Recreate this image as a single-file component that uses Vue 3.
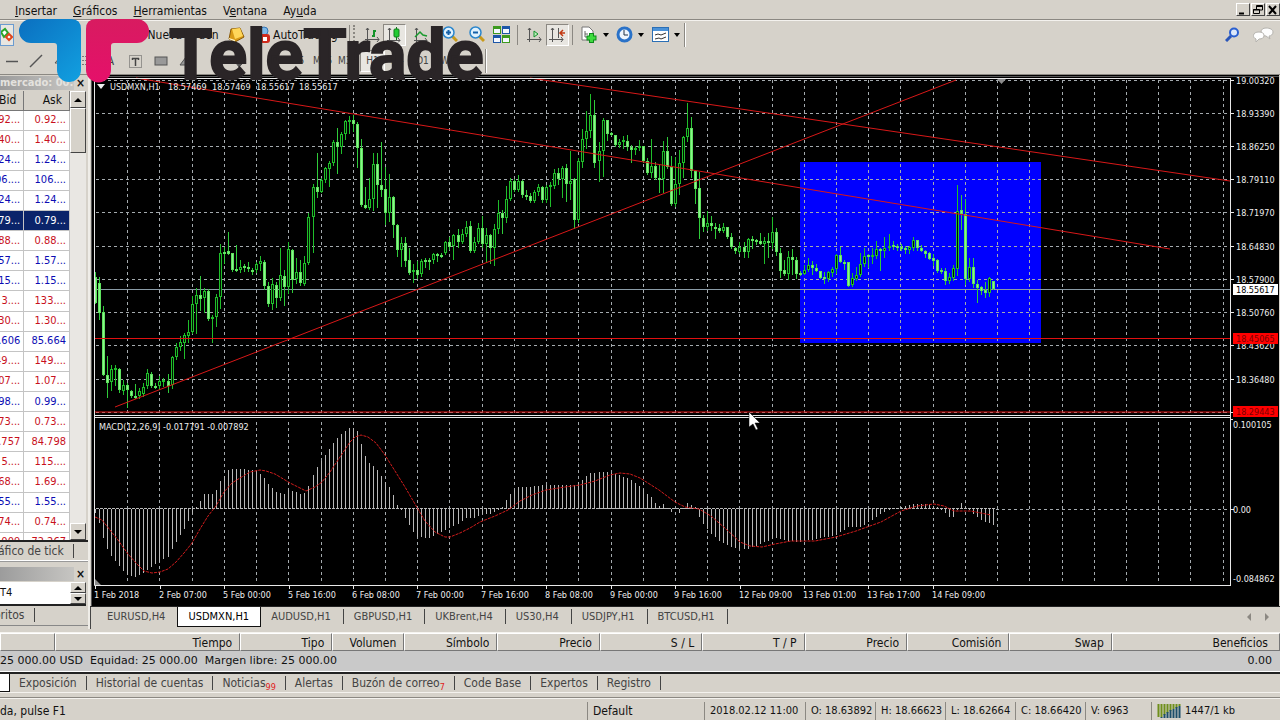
<script setup>
import { computed, ref } from 'vue';

const menus = [
  { key: 'I', rest: 'nsertar' },
  { key: 'G', rest: 'ráficos' },
  { key: 'H', rest: 'erramientas' },
  { pre: 'V', key: 'e', rest: 'ntana' },
  { pre: 'Ay', key: 'u', rest: 'da' },
];

const frames = ['M5', 'M15', 'M30', 'H1', 'H4', 'D1', 'W1', 'MN'];
const frame = ref('H1');

const quotes = [
  { bid: '92...', ask: '0.92...', dir: 'down' },
  { bid: '40...', ask: '1.40...', dir: 'down' },
  { bid: '24...', ask: '1.24...', dir: 'up' },
  { bid: '06....', ask: '106....', dir: 'up' },
  { bid: '24...', ask: '1.24...', dir: 'up' },
  { bid: '79...', ask: '0.79...', dir: 'selected' },
  { bid: '88...', ask: '0.88...', dir: 'down' },
  { bid: '57...', ask: '1.57...', dir: 'up' },
  { bid: '15...', ask: '1.15...', dir: 'up' },
  { bid: '3....', ask: '133....', dir: 'down' },
  { bid: '30...', ask: '1.30...', dir: 'down' },
  { bid: '.606', ask: '85.664', dir: 'up' },
  { bid: '49....', ask: '149....', dir: 'down' },
  { bid: '07...', ask: '1.07...', dir: 'down' },
  { bid: '98...', ask: '0.99...', dir: 'up' },
  { bid: '73...', ask: '0.73...', dir: 'down' },
  { bid: '.757', ask: '84.798', dir: 'down' },
  { bid: '5....', ask: '115....', dir: 'down' },
  { bid: '68...', ask: '1.69...', dir: 'down' },
  { bid: '55...', ask: '1.55...', dir: 'up' },
  { bid: '74...', ask: '0.74...', dir: 'down' },
  { bid: '.009', ask: '72.267', dir: 'down' },
];

const chartTabs = ['EURUSD,H4', 'USDMXN,H1', 'AUDUSD,H1', 'GBPUSD,H1', 'UKBrent,H4', 'US30,H4', 'USDJPY,H1', 'BTCUSD,H1'];
const activeTab = ref('USDMXN,H1');

const columns = ['', 'Tiempo', 'Tipo', 'Volumen', 'Símbolo', 'Precio', 'S / L', 'T / P', 'Precio', 'Comisión', 'Swap', 'Beneficios'];

const terminalTabs = [
  { name: 'Exposición' },
  { name: 'Historial de cuentas' },
  { name: 'Noticias', badge: 99 },
  { name: 'Alertas' },
  { name: 'Buzón de correo', badge: 7 },
  { name: 'Code Base' },
  { name: 'Expertos' },
  { name: 'Registro' },
];

const status = ['2018.02.12 11:00', 'O: 18.63892', 'H: 18.66623', 'L: 18.62664', 'C: 18.66420', 'V: 6963'];

// chart geometry
const STEP = 4.028;
const barX = (i) => Math.round(95 + i * STEP);
const gridX = Array.from({ length: 35 }, (_, i) => Math.round(127.2 + i * 32.22));
const prices = ['19.00320', '18.93390', '18.86250', '18.79110', '18.71970', '18.64830', '18.57900', '18.50760', '18.43620', '18.36480'];
const gridY = Array.from({ length: 11 }, (_, i) => Math.round(79.6 + i * 33.22));
const dates = [
  '1 Feb 2018', '2 Feb 07:00', '5 Feb 00:00', '5 Feb 16:00', '6 Feb 08:00', '7 Feb 00:00', '7 Feb 16:00',
  '8 Feb 08:00', '9 Feb 00:00', '9 Feb 16:00', '12 Feb 09:00', '13 Feb 01:00', '13 Feb 17:00', '14 Feb 09:00',
];
const dateX = (i) => Math.round(95.2 + i * 64.44);
const header = [
  { x: 110, text: 'USDMXN,H1' },
  { x: 168, text: '18.57469' },
  { x: 212, text: '18.57469' },
  { x: 256, text: '18.55617' },
  { x: 299, text: '18.55617' },
];

// high, body top, body bottom, low, rising
const candles = [
  [272,277,303,303,0],[277,283,313,319,0],[306,312,375,375,0],[356,375,383,397,0],[365,369,382,390,1],[365,368,369,385,1],
  [368,369,390,392,0],[380,385,391,394,1],[383,385,390,407,0],[390,391,396,397,0],[384,396,397,398,0],[388,391,396,398,1],
  [383,387,394,396,1],[369,373,386,388,1],[372,374,386,387,0],[383,386,388,388,0],[376,381,386,389,1],[378,380,382,386,1],
  [374,381,386,392,0],[356,357,385,388,1],[343,347,357,359,1],[336,342,347,350,1],[333,335,343,358,1],[320,332,336,342,1],
  [296,304,332,333,1],[288,295,304,333,1],[276,295,299,310,0],[288,291,298,312,1],[289,291,319,320,0],[315,317,319,342,1],
  [294,297,317,326,1],[244,253,297,308,1],[247,252,254,263,0],[232,251,254,254,0],[253,253,270,271,0],[245,269,271,271,0],
  [260,267,270,272,1],[264,266,268,271,0],[262,267,269,271,0],[268,270,271,274,0],[262,264,270,272,1],[256,261,264,270,1],
  [260,262,286,289,0],[282,286,304,306,0],[278,284,304,309,1],[282,285,298,307,0],[248,275,298,300,1],[270,276,287,305,0],
  [242,249,287,293,1],[249,250,280,292,0],[258,272,279,283,1],[260,272,283,285,0],[256,263,284,285,1],[213,217,263,264,1],
  [184,187,217,252,1],[153,187,192,197,0],[178,180,192,192,1],[167,168,180,182,1],[161,163,169,186,1],[140,142,163,165,1],
  [128,142,147,173,0],[132,134,147,153,1],[120,121,134,139,1],[116,120,121,133,1],[115,120,124,131,0],[122,124,148,167,0],
  [139,148,205,206,0],[187,205,208,208,0],[178,199,208,209,1],[153,164,199,210,1],[153,164,185,207,0],[142,185,190,196,0],
  [167,189,213,224,0],[174,197,213,221,1],[196,197,225,237,0],[224,225,250,256,0],[237,243,250,266,1],[237,243,261,266,0],
  [248,260,273,274,0],[264,270,272,282,1],[261,270,275,278,0],[259,261,274,276,1],[258,260,261,267,0],[258,260,262,269,0],
  [253,254,260,263,1],[253,254,256,261,0],[253,255,257,257,0],[241,242,253,254,1],[237,242,247,249,0],[234,235,246,259,1],
  [229,235,242,247,0],[229,234,242,243,1],[221,227,234,236,1],[221,226,251,252,0],[237,242,251,252,1],[223,228,242,243,1],
  [216,228,244,247,0],[228,235,244,262,1],[234,235,248,263,0],[224,229,248,265,1],[200,213,229,233,1],[210,213,218,233,0],
  [186,199,218,222,1],[178,181,199,200,1],[179,181,190,191,0],[175,181,190,191,1],[180,181,195,197,0],[190,195,197,199,0],
  [193,196,201,202,0],[190,192,201,202,1],[184,187,192,195,1],[186,187,200,202,0],[185,187,200,202,1],[182,185,187,206,1],
  [169,173,186,188,1],[168,173,179,184,0],[166,168,179,197,1],[164,168,184,201,0],[151,181,184,199,1],[178,179,220,228,0],
  [158,161,220,222,1],[129,139,162,167,1],[111,131,139,148,1],[94,115,131,137,1],[100,115,163,167,0],[142,151,161,181,1],
  [118,120,151,176,1],[120,120,134,140,0],[132,133,134,135,0],[135,135,145,146,0],[139,142,145,147,1],[136,140,142,148,1],
  [135,141,147,150,0],[145,147,150,162,0],[146,148,150,154,1],[140,146,147,150,1],[146,146,161,162,0],[158,161,173,174,0],
  [139,166,173,177,1],[162,166,178,179,0],[165,178,180,192,0],[141,151,179,192,1],[137,151,167,168,0],[156,167,204,205,0],
  [157,184,204,206,1],[150,163,184,194,1],[136,137,163,177,1],[103,128,137,141,1],[117,128,171,177,0],[170,171,189,203,0],
  [172,188,218,238,0],[215,218,227,231,0],[211,223,227,230,1],[216,223,226,230,0],[223,227,228,238,0],[224,228,231,232,0],
  [223,227,231,232,1],[227,227,237,238,0],[233,237,247,248,0],[247,248,251,253,0],[242,247,252,253,1],[242,247,252,257,0],
  [238,239,252,257,1],[236,239,240,248,0],[239,240,242,244,0],[233,241,244,244,0],[237,241,244,263,1],[233,241,243,257,0],
  [217,232,243,248,1],[228,232,252,255,0],[248,253,271,277,0],[260,270,274,275,0],[251,257,274,279,1],[249,257,260,274,0],
  [257,260,274,278,0],[271,273,274,275,0],[265,270,274,274,1],[258,265,270,271,1],[261,265,268,274,0],[264,268,271,271,0],
  [271,271,278,278,0],[272,277,279,283,0],[271,272,279,281,1],[267,269,273,276,1],[254,255,269,273,1],[247,255,262,262,0],
  [260,262,263,269,0],[262,262,286,286,0],[273,278,285,286,1],[267,275,279,280,1],[253,264,275,276,1],[248,256,264,266,1],
  [254,255,257,267,0],[248,255,257,263,1],[241,249,256,258,1],[248,249,251,270,0],[237,248,251,257,1],[234,246,248,250,1],
  [241,245,247,249,0],[244,246,248,250,0],[244,247,248,250,0],[246,248,250,253,0],[246,247,250,253,1],[237,240,248,250,1],
  [240,240,248,250,0],[245,248,251,251,0],[250,251,254,257,0],[252,253,259,259,0],[254,258,261,265,0],[259,260,271,272,0],
  [268,270,271,273,0],[268,271,281,284,0],[273,277,281,283,1],[265,268,278,280,1],[185,211,269,275,1],[195,210,214,229,0],
  [199,214,279,284,0],[258,267,279,281,1],[258,267,284,287,0],[280,284,288,302,0],[286,287,291,294,0],[282,290,293,297,0],
  [277,278,293,296,1],[281,281,289,289,0],
];

// MACD histogram: bar index and height above the zero line
const macdKeys = [
  [0,-4],[1,-14],[2,-29],[3,-40],[4,-47],[5,-52],[6,-57],[7,-62],[8,-66],[10,-68],[12,-64],[14,-58],[16,-53],[18,-48],[19,-40],
  [20,-33],[22,-20],[24,-5],[25,2],[26,8],[27,15],[29,15],[30,19],[31,28],[32,33],[33,39],[34,40],[37,40],[40,38],[41,35],
  [42,31],[43,25],[45,17],[47,15],[48,19],[50,17],[51,15],[52,16],[53,23],[54,34],[55,42],[57,54],[59,66],[61,75],[63,81],
  [64,81],[65,78],[66,65],[67,53],[68,46],[70,39],[72,27],[73,22],[74,14],[75,4],[76,-1],[77,-9],[79,-23],[80,-28],[83,-29],
  [86,-23],[90,-15],[92,-9],[94,-9],[96,-5],[98,-5],[100,-1],[101,2],[103,15],[105,22],[108,22],[112,24],[116,24],[119,24],
  [121,29],[123,36],[127,37],[130,34],[133,29],[136,20],[137,15],[138,12],[139,6],[140,3],[141,5],[143,-3],[144,0],[145,-4],
  [147,6],[149,2],[150,-8],[151,-15],[153,-25],[155,-32],[158,-38],[160,-40],[162,-40],[165,-35],[169,-29],[172,-32],[175,-33],
  [179,-30],[184,-26],[187,-18],[190,-18],[193,-11],[195,-5],[197,-1],[200,2],[203,5],[206,5],[209,2],[211,-4],[212,-8],
  [213,-8],[214,-1],[215,6],[216,2],[218,-5],[220,-11],[223,-16],
];
const macd = computed(() =>
  candles.map((_, i) => {
    const n = macdKeys.findIndex((k) => k[0] >= i);
    const [bx, by] = macdKeys[n];
    if (bx === i) return by;
    const [ax, ay] = macdKeys[n - 1];
    return Math.round(ay + ((by - ay) * (i - ax)) / (bx - ax));
  }),
);

const signal =
  '95,517 102,520 110,530 118,540 128,554 136,563 144,571 152,573 160,572 168,569 176,562 184,553 192,543 200,529 208,516 ' +
  '216,506 224,492 232,483 240,478 250,472 260,470 266,471 275,474 290,483 300,488 306,491 315,487 322,482 330,472 340,457 ' +
  '350,442 355,437 361,435 368,437 376,443 385,455 395,471 405,487 415,504 425,521 435,532 445,537 450,537 460,533 470,528 ' +
  '480,522 495,516 508,510 520,501 532,495 546,490 565,487 580,485 595,481 610,475 620,473 630,474 640,478 659,490 675,502 ' +
  '685,507 699,509 711,516 726,529 740,542 750,546 762,547 775,544 791,541 815,541 836,537 856,531 881,522 901,511 917,506 ' +
  '934,504 944,506 954,511 971,511 991,515';
</script>

<template>
  <div class="terminal">
    <header class="menubar">
      <nav class="menus">
        <button v-for="m in menus" :key="m.rest" class="menu">{{ m.pre }}<u>{{ m.key }}</u>{{ m.rest }}</button>
      </nav>
      <div class="window-buttons">
        <button class="win" aria-label="Minimizar"><svg width="12" height="10"><path d="M2 8.500h5" stroke="#000" stroke-width="2" /></svg></button>
        <button class="win" aria-label="Restaurar">
          <svg width="12" height="10"><path d="M4.500 4V.500h6v4.500H8M4 1.500h7M1.500 4.500h6v4h-6zM1 5h7" fill="none" stroke="#000" /></svg>
        </button>
        <button class="win" aria-label="Cerrar"><svg width="12" height="10"><path d="M2 1l7 8M9 1l-7 8" stroke="#000" stroke-width="2" /></svg></button>
      </div>
    </header>

    <div class="toolbar toolbar-main">
      <button class="tool first pressed" aria-label="Símbolos">
        <svg width="13" height="16"><path d="M0 5l4-3 3 4-4 4z" fill="#fff" stroke="#2aa52a" stroke-width="2" /><path d="M5 10l3-3 3 3-3 3z" fill="#fff" stroke="#e0461c" stroke-width="2" /></svg>
      </button>
      <button class="tool order">Nueva Orden</button>
      <button class="tool book" aria-label="MetaEditor">
        <svg width="18" height="18" viewBox="0 0 18 18"><path d="M4 3l9-1 4 9-9 5-6-3z" fill="#d89a16" stroke="#8a5a08" /><path d="M5 3l8-1 3 8-8 3z" fill="#ffd75a" /><path d="M2 12l6 2v2l-6-3z" fill="#fff3c0" /></svg>
      </button>
      <button class="tool auto">
        <svg width="14" height="18" viewBox="0 0 14 18"><circle cx="6" cy="5" r="4" fill="#7db8e8" stroke="#3575b5" /><rect x="2" y="8" width="10" height="9" rx="3" fill="#d02a1c" /><rect x="5" y="11" width="4" height="4" fill="#fff" /></svg>
        <span>AutoTrading</span>
      </button>
      <i class="grip"></i>
      <button class="tool w23" aria-label="Barras">
        <svg width="16" height="16"><path d="M3.500 1v14M1 12.500h14M13 10l2 2.500-2 2.500M2 3l1.500-2L5 3" fill="none" stroke="#555" /><path d="M8 9h2M10 3v7M10 4h2" stroke="#14932a" stroke-width="2" /></svg>
      </button>
      <button class="tool w23 pressed" aria-label="Velas">
        <svg width="16" height="16"><path d="M2.500 1v14M0 13.500h13M11 11l2 2.500-2 2M1 3l1.500-2L4 3" fill="none" stroke="#555" /><path d="M9.500 0v13" stroke="#117a1c" /><rect x="7" y="2" width="5" height="8" rx="1" fill="#22cc33" stroke="#117a1c" /></svg>
      </button>
      <button class="tool w29" aria-label="Línea">
        <svg width="16" height="16"><path d="M3.500 1v14M1 13.500h13M12 11l2 2.500-2 2M2 3l1.500-2L5 3" fill="none" stroke="#555" /><path d="M2 10l5-5 3 3 4 1" fill="none" stroke="#189a2c" stroke-width="1.500" /></svg>
      </button>
      <button class="tool w29" aria-label="Acercar">
        <svg width="16" height="17"><path d="M10 10l5 5" stroke="#c99a1a" stroke-width="3" /><circle cx="6.500" cy="6.500" r="5.500" fill="#dff1fd" stroke="#2b86cc" stroke-width="1.500" /><path d="M4 6.500h5M6.500 4v5" stroke="#1460a8" stroke-width="2" /></svg>
      </button>
      <button class="tool w25" aria-label="Alejar">
        <svg width="16" height="17"><path d="M10 10l5 5" stroke="#c99a1a" stroke-width="3" /><circle cx="6.500" cy="6.500" r="5.500" fill="#dff1fd" stroke="#2b86cc" stroke-width="1.500" /><path d="M4 6.500h5" stroke="#1460a8" stroke-width="2" /></svg>
      </button>
      <button class="tool w25" aria-label="Mosaico">
        <svg width="17" height="17"><rect width="8" height="8" fill="#3d9a1e" /><rect x="9" width="8" height="8" fill="#1c56a8" /><rect y="9" width="8" height="8" fill="#1c56a8" /><rect x="9" y="9" width="8" height="8" fill="#3d9a1e" /><path d="M1 5h6M10 5h6M1 14h6M10 14h6" stroke="#f4f8ff" stroke-width="4" /></svg>
      </button>
      <i class="sep"></i>
      <button class="tool w25" aria-label="Desplazamiento automático">
        <svg width="16" height="16"><path d="M3.500 1v14M1 12.500h14M13 10l2 2.500-2 2.500M2 3l1.500-2L5 3" fill="none" stroke="#555" /><path d="M8 4l4 3-4 3z" fill="#bff0c0" stroke="#14932a" /></svg>
      </button>
      <button class="tool w23 pressed" aria-label="Desplazar gráfico">
        <svg width="17" height="16"><path d="M3.500 1v14M0 12.500h14M12 10l2 2.500-2 2.500M2 3l1.500-2L5 3M9.500 1v10" fill="none" stroke="#555" /><path d="M11 6h5M14 3l-3 3 3 3" fill="none" stroke="#c23a14" stroke-width="1.500" /></svg>
      </button>
      <i class="sep"></i>
      <button class="tool drop" aria-label="Indicadores">
        <svg width="18" height="18"><path d="M2 1h7l4 4v9H2z" fill="#fff" stroke="#777" /><path d="M5 5v6h3M5 8h3" fill="none" stroke="#666" /><path d="M11.500 7v10M6.500 12h10" stroke="#0f8b1c" stroke-width="5" /><path d="M11.500 8v8M7.500 12h8" stroke="#3fdc3f" stroke-width="3" /></svg>
        <i class="caret"></i>
      </button>
      <button class="tool drop" aria-label="Períodos">
        <svg width="17" height="17"><circle cx="8.500" cy="8.500" r="6.500" fill="#eef6fd" stroke="#2a72c8" stroke-width="3" /><path d="M8 4v5h4" fill="none" stroke="#234" /></svg>
        <i class="caret"></i>
      </button>
      <button class="tool drop" aria-label="Plantillas">
        <svg width="17" height="15"><rect x=".5" y=".5" width="16" height="14" fill="#fff" stroke="#2b6fb5" /><path d="M1 2.500h15" stroke="#4b92d8" stroke-width="3" /><path d="M3 8l3-1 3 1 5-2M3 12l4-1 2 1 5-2" fill="none" stroke="#333" /></svg>
        <i class="caret"></i>
      </button>
      <i class="bar-end"></i>
      <span class="spacer"></span>
      <button class="tool" aria-label="Buscar">
        <svg width="15" height="15"><path d="M6 9l-5 5" stroke="#2a55b8" stroke-width="3" /><circle cx="9" cy="5.500" r="4" fill="#dce8fa" stroke="#2a5fd0" stroke-width="2" /></svg>
      </button>
      <button class="tool chat" aria-label="Chat">
        <svg width="21" height="16"><path d="M13 1c4 0 7 1.500 7 4s-2 4-4 4l1 3-4-3c-3 0-5-1.500-5-4s2-4 5-4z" fill="#fdfdfd" stroke="#b5b3ae" /><path d="M6 5c3 0 5 1 5 3.500S9 12 6 12l-3 3V12C1 11 .5 10 .5 8.500.5 6 3 5 6 5z" fill="#fff" stroke="#b5b3ae" /></svg>
      </button>
    </div>

    <div class="toolbar toolbar-draw">
      <button class="tool w23" aria-label="Línea horizontal"><svg width="14" height="14"><path d="M1 7.500h12" stroke="#555" stroke-width="1.500" /></svg></button>
      <button class="tool w25" aria-label="Línea de tendencia"><svg width="14" height="14"><path d="M1 13L13 1" stroke="#555" stroke-width="1.500" /></svg></button>
      <button class="tool w25" aria-label="Canal"><svg width="14" height="14"><path d="M1 9l7-8M3 13l8-8M1 9h8" stroke="#555" /></svg></button>
      <button class="tool w25" aria-label="Fibonacci"><svg width="14" height="14"><path d="M0 2.500h14M0 6.500h14M0 10.500h14" stroke="#777" stroke-dasharray="2 1" /></svg></button>
      <button class="tool w25" aria-label="Texto">A</button>
      <button class="tool w25" aria-label="Etiqueta">
        <svg width="15" height="15"><rect x="1.500" y="1.500" width="12" height="12" fill="none" stroke="#555" stroke-dasharray="1 1" /><path d="M4 4.500h7M7.500 4v8M4.500 4v2M10.500 4v2" stroke="#444" stroke-width="1.500" /></svg>
      </button>
      <button class="tool w25" aria-label="Rectángulo"><svg width="14" height="11"><rect x="1" y="1" width="12" height="8" fill="#999" stroke="#555" /></svg></button>
      <button class="tool w25" aria-label="Triángulo"><svg width="14" height="11"><path d="M1 9L7 1l6 8z" fill="#999" stroke="#555" /></svg></button>
      <button class="tool arrows" aria-label="Flechas"><svg width="14" height="14"><path d="M1 3l3 4 6-6M5 9h7l-4 4z" fill="#555" stroke="#555" /></svg></button>
      <button
        v-for="f in frames"
        :key="f"
        class="tool w25 frame"
        :class="{ pressed: f === frame }"
        @click="frame = f"
      >{{ f }}</button>
      <i class="bar-end"></i>
    </div>

    <div class="logo">
      <svg width="150" height="64" viewBox="0 19 150 64">
        <defs>
          <linearGradient id="blue" x1="0" y1="0" x2="1" y2="1"><stop offset="0" stop-color="#0a6fc0" /><stop offset="1" stop-color="#12a0e0" /></linearGradient>
          <linearGradient id="pink" x1="0" y1="0" x2="0" y2="1"><stop offset="0" stop-color="#d81b60" /><stop offset="1" stop-color="#e5106a" /></linearGradient>
        </defs>
        <path d="M31 19H71Q81 19 81 29V70A12 12 0 0 1 57 70V46Q57 43 54 43H31A12 12 0 0 1 31 19Z" fill="url(#blue)" />
        <path d="M96 19H137A12 12 0 0 1 137 43H114Q111 43 111 46V70A12.500 12.500 0 0 1 86 70V29Q86 19 96 19Z" fill="url(#pink)" />
      </svg>
      <span class="logo-text">TeleTrade</span>
    </div>

    <main class="workspace">
      <aside class="side">
        <div class="side-title"><span>mercado: 00:4</span><button class="close" aria-label="Cerrar">×</button></div>
        <div class="quotes">
          <div class="quotes-clip">
            <table class="quotes-table">
              <thead><tr><th>Bid</th><th>Ask</th></tr></thead>
              <tbody>
                <tr v-for="(q, i) in quotes" :key="i" :class="q.dir"><td>{{ q.bid }}</td><td>{{ q.ask }}</td></tr>
              </tbody>
            </table>
          </div>
          <div class="scroll">
            <button class="scroll-btn" aria-label="Subir"><i class="tri-up"></i></button>
            <div class="thumb"></div>
            <span class="spacer"></span>
            <button class="scroll-btn" aria-label="Bajar"><i class="tri-down"></i></button>
          </div>
        </div>
        <div class="side-tab tick"><button>áfico de tick</button></div>
        <div class="side-title navigator"><span></span><button class="close" aria-label="Cerrar">×</button></div>
        <div class="nav-list">
          <span>T4</span>
          <div class="spin">
            <button aria-label="Arriba"><i class="tri-up"></i></button>
            <button aria-label="Abajo"><i class="tri-down"></i></button>
          </div>
        </div>
        <div class="side-tab favorites"><button>oritos</button></div>
      </aside>

      <section class="chart-area">
        <svg class="chart" viewBox="90 75 1190 531">
          <rect x="91" y="75" width="1188" height="531" fill="#000" />
          <path d="M91.500 75v531M92 76.500h1187" stroke="#555" fill="none" />
          <rect x="800" y="162" width="241" height="181" fill="#0000ff" />

          <g class="grid">
            <line v-for="x in gridX" :key="'v' + x" :x1="x + 0.5" :x2="x + 0.5" y1="80" y2="583" />
            <line v-for="y in gridY" :key="'h' + y" x1="96" x2="1230" :y1="y + 0.5" :y2="y + 0.5" />
            <line x1="996" x2="1230" y1="509.5" y2="509.5" />
          </g>

          <line x1="95" x2="1230" y1="289.5" y2="289.5" stroke="#8a9ba6" />

          <g class="bars">
            <g v-for="(c, i) in candles" :key="i" :class="c[4] ? 'bull' : 'bear'">
              <line :x1="barX(i) + 0.5" :x2="barX(i) + 0.5" :y1="c[0]" :y2="c[3] + 1" />
              <rect :x="barX(i) - 0.5" :y="c[1] + 0.5" width="2" :height="Math.max(c[2] - c[1] - 1, 1)" />
            </g>
          </g>

          <g class="trend">
            <path d="M115 407L956 80M136 78L1170 249M530 78L1230 181" />
            <path d="M95 338.500H1230M95 412H1230" class="level" />
          </g>

          <rect x="95" y="414" width="1184" height="5" fill="#000" />
          <g class="histogram">
            <line x1="96" x2="996" y1="508.5" y2="508.5" stroke-dasharray="3 1" />
            <line v-for="(m, i) in macd" :key="i" :x1="barX(i) + 0.5" :x2="barX(i) + 0.5" y1="509" :y2="509 - m" />
          </g>
          <polyline class="signal" :points="signal" />

          <g class="frame-lines">
            <path d="M94.500 78V585.500H1231M94 78.500H1230M1230.500 78V586M94 415.500H1231M94 417.500H1231" />
            <path v-for="(d, i) in dates" :key="d" :d="`M${dateX(i) + 0.5} 586v3`" />
            <path v-for="y in gridY" :key="y" :d="`M1231 ${y + 0.5}h3`" />
            <path d="M1231 509.500h3M1231 419.500h2" />
          </g>
          <path d="M997 79h9l-4.500 5zM95 579l6 6h-6z" fill="#8c8c8c" />

          <g class="labels">
            <path d="M97 84h8l-4 5z" />
            <text v-for="h in header" :key="h.x" :x="h.x" y="90">{{ h.text }}</text>
            <text x="99" y="430">MACD(12,26,9) -0.017791 -0.007892</text>
            <text v-for="(p, i) in prices" :key="p" x="1236" :y="gridY[i] + 4">{{ p }}</text>
            <text x="1233" y="428">0.100105</text>
            <text x="1233" y="513">0.00</text>
            <text x="1233" y="582">-0.084862</text>
            <text v-for="(d, i) in dates" :key="d" :x="dateX(i) - 1" y="598">{{ d }}</text>
          </g>

          <rect x="1233" y="284" width="45" height="11" fill="#fff" />
          <text class="tag" x="1236" y="293">18.55617</text>
          <rect x="1233" y="333" width="45" height="11" fill="#f00" />
          <text class="tag level-tag" x="1236" y="342">18.45065</text>
          <rect x="1233" y="406" width="45" height="11" fill="#f00" />
          <text class="tag level-tag" x="1236" y="415">18.29443</text>

          <path d="M749 412v15l4-3 3 6 2-1-3-6h5z" fill="#fff" stroke="#000" stroke-width=".5" />
        </svg>

        <div class="chart-tabs">
          <button
            v-for="t in chartTabs"
            :key="t"
            class="chart-tab"
            :class="{ active: t === activeTab }"
            @click="activeTab = t"
          >{{ t }}</button>
          <span class="spacer"></span>
          <button class="page-btn" aria-label="Anterior"><i class="tri-left"></i></button>
          <button class="page-btn" aria-label="Siguiente"><i class="tri-right"></i></button>
        </div>
      </section>
    </main>

    <section class="account">
      <table class="orders">
        <thead><tr><th v-for="(c, i) in columns" :key="i">{{ c }}</th></tr></thead>
        <tbody>
          <tr>
            <td colspan="11">25 000.00 USD&#160; Equidad: 25 000.00&#160; Margen libre: 25 000.00</td>
            <td class="profit">0.00</td>
          </tr>
        </tbody>
      </table>
      <nav class="account-tabs">
        <i class="current"></i>
        <button v-for="t in terminalTabs" :key="t.name">{{ t.name }}<sub v-if="t.badge">{{ t.badge }}</sub></button>
      </nav>
    </section>

    <footer class="statusbar">
      <span class="help">da, pulse F1</span>
      <span class="profile">Default</span>
      <span v-for="(s, i) in status" :key="s" class="cell" :class="{ time: i === 0, volume: i === 5 }">{{ s }}</span>
      <span class="cell traffic">
        <svg width="24" height="14"><path d="M1.500 0v13M4.500 0v13M7.500 0v11M10.500 0v9M13.500 0v7M16.500 0v5M19.500 0v4M22.500 0v2" stroke="#6f8f1c" stroke-width="2" /><path d="M4.500 13v1M7.500 10v4M10.500 8v6M13.500 6v8M16.500 5v9M19.500 3v11M22.500 2v12" stroke="#1d4e6a" stroke-width="2" /></svg>
        1447/1 kb
      </span>
    </footer>
  </div>
</template>

<style>
body {
  margin: 0;
  background: #d6d2ca;
}
</style>

<style scoped>
.terminal {
  position: relative;
  min-height: 100vh;
  display: flex;
  flex-direction: column;
  overflow: hidden;
  background: #d6d2ca;
  color: #111;
  font-family: 'DejaVu Sans Condensed', 'DejaVu Sans', sans-serif;
  font-size: 12px;
  line-height: 14px;
}

button {
  margin: 0;
  padding: 0;
  border: 0;
  background: none;
  color: inherit;
  font: inherit;
  white-space: nowrap;
}

.spacer { flex: 1; }

/* Menu */
.menubar {
  display: flex;
  justify-content: space-between;
  align-items: center;
  height: 19px;
  padding-left: 15px;
  border-bottom: 1px solid #8b8882;
}

.menus {
  display: flex;
  gap: 16px;
  padding-top: 3px;
}

.window-buttons { display: flex; gap: 1px; }

.win {
  display: flex;
  align-items: center;
  justify-content: center;
  width: 14px;
  height: 13px;
  border: 1px solid;
  border-color: #fff #444 #444 #fff;
}

/* Toolbars */
.toolbar {
  display: flex;
  align-items: center;
  box-sizing: border-box;
}

.toolbar-main {
  height: 28px;
  border-top: 1px solid #f4f2ee;
}

.toolbar-draw {
  height: 27px;
  border-bottom: 1px solid #8b8882;
  color: #444;
}

.tool {
  display: flex;
  align-items: center;
  justify-content: center;
  flex: none;
  height: 22px;
  box-sizing: border-box;
}

.tool.pressed {
  border: 1px solid;
  border-color: #8b8882 #fff #fff #8b8882;
  background: #e8e6e1;
}

.tool.first { width: 14px; border-color: #6a9bd0; }
.order { width: 70px; margin-left: 134px; }
.book { width: 20px; margin-left: 8px; }
.auto { width: 86px; margin-left: 12px; gap: 1px; justify-content: flex-start; }
.w23 { width: 23px; }
.w25 { width: 25px; }
.w29 { width: 29px; }
.drop { width: 36px; gap: 5px; }
.chat { width: 22px; margin: 0 6px 0 12px; }
.arrows { width: 25px; margin: 0 35px 0 27px; }
.frame { font-size: 10px; }

.grip {
  width: 3px;
  height: 20px;
  margin: 0 5px;
  border-left: 1px solid #8b8882;
  border-right: 2px dotted #8b8882;
}

.sep {
  width: 1px;
  height: 20px;
  margin: 0 3px;
  background: #8b8882;
}

.bar-end {
  width: 1px;
  height: 24px;
  border-left: 1px solid #8b8882;
  background: #fff;
}

.caret {
  border: 3px solid transparent;
  border-top: 4px solid #000;
  border-bottom: 0;
}

/* Brand, floats over both toolbars */
.logo {
  position: absolute;
  top: 19px;
  left: 0;
  display: flex;
  align-items: flex-start;
  gap: 19px;
  pointer-events: none;
}

.logo-text {
  color: #2a2527;
  font-family: Roboto, 'Liberation Sans', sans-serif;
  font-size: 70px;
  font-weight: 700;
  line-height: 72px;
  -webkit-text-stroke: 2px #2a2527;
}

/* Workspace */
.workspace {
  display: flex;
  align-items: stretch;
}

.side {
  display: flex;
  flex-direction: column;
  flex: none;
  width: 90px;
  box-sizing: border-box;
  border-right: 2px solid #efede8;
}

.side-title {
  display: flex;
  align-items: center;
  justify-content: space-between;
  height: 16px;
  padding-right: 3px;
}

.side-title span {
  width: 74px;
  height: 14px;
  overflow: hidden;
  background: linear-gradient(90deg, #9c9c9c, #c6c5c2);
  color: #e4e2de;
  font-weight: 700;
  font-size: 11px;
  white-space: nowrap;
}

.close {
  font-weight: 700;
  font-size: 12px;
  line-height: 12px;
}

.quotes {
  display: flex;
  height: 449px;
  border-bottom: 2px solid #222;
}

.quotes-clip {
  display: flex;
  justify-content: flex-end;
  width: 70px;
  overflow: hidden;
  background: #fff;
}

.quotes-table {
  flex: none;
  width: 92px;
  height: 462px;
  table-layout: fixed;
  border-collapse: collapse;
  text-align: right;
  font-size: 11px;
}

.quotes-table th {
  height: 19px;
  padding: 0 7px 0 0;
  box-sizing: border-box;
  border-right: 1px solid #777;
  border-bottom: 1px solid #777;
  background: #d6d2ca;
  font-weight: 400;
  font-size: 12px;
}

.quotes-table td {
  padding: 0 3px 0 0;
  border-right: 1px solid #c4c4c4;
  border-bottom: 1px solid #c4c4c4;
}

.up { color: #0c0cb4; }
.down { color: #c8101c; }
.selected { background: #0a246a; color: #fff; }

.scroll {
  display: flex;
  flex-direction: column;
  width: 16px;
  background: #e9e7e3;
}

.scroll-btn,
.thumb,
.spin button {
  display: flex;
  align-items: center;
  justify-content: center;
  box-sizing: border-box;
  border: 1px solid;
  border-color: #fff #444 #444 #fff;
  background: #d6d2ca;
}

.scroll-btn { height: 17px; }
.thumb { height: 45px; }

.tri-up {
  border: 4px solid transparent;
  border-bottom-color: #000;
  border-top: 0;
}

.tri-down {
  border: 4px solid transparent;
  border-top-color: #000;
  border-bottom: 0;
}

.side-tab {
  display: flex;
  align-items: center;
  overflow: hidden;
  color: #444;
}

.side-tab button {
  padding-right: 9px;
  border-right: 1px solid #444;
}

.tick {
  height: 17px;
  padding-bottom: 1px;
  border-bottom: 1px solid #fff;
}

.tick button { margin-left: -2px; }

.navigator {
  padding-top: 4px;
  border-top: 1px solid #999;
}

.nav-list {
  display: flex;
  justify-content: space-between;
  align-items: center;
  height: 22px;
  margin-right: 2px;
  border-bottom: 2px solid #222;
  background: #fff;
  font-size: 11px;
}

.spin {
  display: flex;
  flex-direction: column;
  width: 16px;
}

.spin button { height: 11px; }

.favorites {
  height: 17px;
  padding-bottom: 2px;
  border-bottom: 1px solid #888;
}

.favorites button { margin-left: -6px; }

.chart-area {
  flex: 1;
  min-width: 0;
}

.chart {
  display: block;
  width: 100%;
  font-size: 9px;
}

.grid line {
  stroke: #a4aaae;
  stroke-dasharray: 3 3;
}

.bull { fill: #001400; stroke: #1fbe2a; }
.bear { fill: #8cf58c; stroke: #5fe35f; }
.bear line { stroke: #2fcb3a; }

.trend path {
  fill: none;
  stroke: #d81818;
}

.trend .level { stroke: #e01010; }
.histogram line { stroke: #b8b8b8; }

.signal {
  fill: none;
  stroke: #d01c1c;
  stroke-dasharray: 3 1;
}

.frame-lines path {
  fill: none;
  stroke: #e8e8e8;
}

.labels { fill: #eee; }
.tag { fill: #000; }
.level-tag { fill: #7a0000; }

.chart-tabs {
  display: flex;
  align-items: flex-start;
  box-sizing: border-box;
  height: 23px;
  padding: 0 4px 0 1px;
  border-top: 1px solid #222;
  border-left: 1px solid #444;
  color: #444;
  font-size: 11px;
}

.chart-tab {
  margin-top: 2px;
  padding: 1px 12px 0 10px;
  border-right: 1px solid #444;
}

.chart-tab:first-child {
  padding-left: 15px;
  border-right: 0;
}

.chart-tab.active {
  margin-top: 0;
  padding: 3px 11px 2px 10px;
  border: 1px solid #111;
  border-top: 0;
  background: #fff;
  color: #000;
}

.page-btn { padding: 6px 7px; }

.tri-left,
.tri-right {
  display: block;
  border: 4px solid transparent;
}

.tri-left { border-right-color: #8b8882; border-left: 0; }
.tri-right { border-left-color: #8b8882; border-right: 0; }

/* Account terminal */
.account {
  border-top: 1px solid #f6f4f0;
  border-bottom: 1px solid #8b8882;
  margin-top: 3px;
}

.orders {
  width: 100%;
  table-layout: fixed;
  border-collapse: separate;
  border-spacing: 0;
  text-align: right;
}

.orders th {
  height: 18px;
  width: 8%;
  padding: 1px 7px 0;
  box-sizing: border-box;
  border: 1px solid;
  border-color: #fff #777 #777 #fff;
  font-weight: 400;
}

.orders th:nth-child(1) { width: 55px; }
.orders th:nth-child(2) { width: 185px; }
.orders th:nth-child(3) { width: 92px; }
.orders th:nth-child(4) { width: 72px; }
.orders th:nth-child(5) { width: 93px; }
.orders th:nth-child(12) { width: 168px; padding-right: 11px; }

.orders td {
  height: 20px;
  padding: 0;
  background: #c9c9c9;
  border-bottom: 1px solid #fff;
  font-family: 'DejaVu Sans', sans-serif;
  font-size: 11px;
  text-align: left;
}

.orders .profit {
  padding-right: 8px;
  text-align: right;
}

.account-tabs {
  display: flex;
  align-items: center;
  height: 17px;
  margin-bottom: 4px;
  padding-bottom: 1px;
  border-top: 2px solid #222;
  border-bottom: 1px solid #f4f2ee;
  color: #444;
}

.current {
  align-self: flex-start;
  width: 9px;
  height: 17px;
  border-right: 1px solid #111;
  border-bottom: 1px solid #111;
  background: #fff;
}

.account-tabs button {
  height: 14px;
  padding: 0 9px;
  border-right: 1px solid #444;
}

.account-tabs sub {
  color: #e02020;
  font-size: 9px;
  line-height: 0;
}

/* Status bar */
.statusbar {
  display: flex;
  align-items: center;
  flex: 1;
  padding: 2px 8px 0 0;
  border-top: 1px solid #f4f2ee;
}

.help { flex: 1; }

.profile,
.cell {
  box-sizing: border-box;
  padding: 2px 0 2px 5px;
  border-left: 1px solid #8b8882;
}

.profile { width: 117px; }

.cell {
  width: 70px;
  font-size: 11px;
  white-space: nowrap;
}

.time { width: 101px; }
.volume { width: 66px; }

.traffic {
  display: flex;
  align-items: center;
  gap: 4px;
  width: 121px;
}
</style>
